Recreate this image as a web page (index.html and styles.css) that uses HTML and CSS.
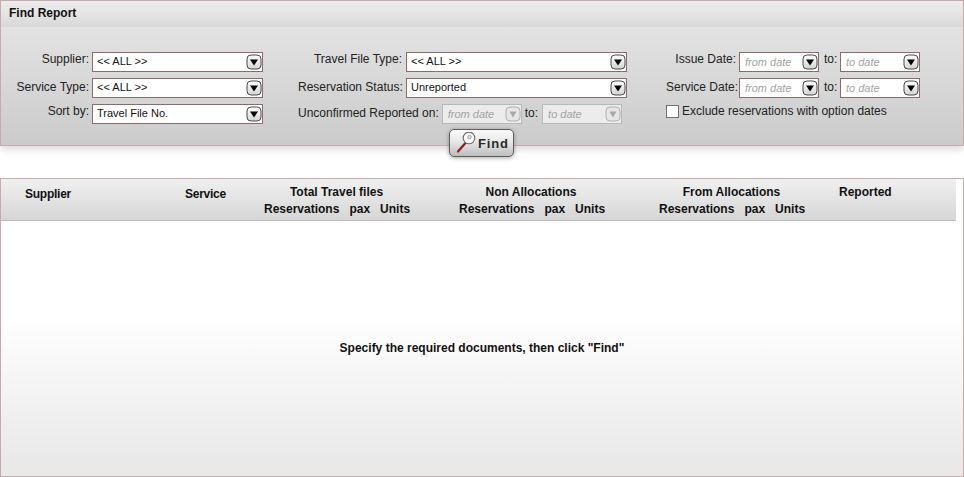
FILE: index.html
```html
<!DOCTYPE html>
<html lang="en">
<head>
<meta charset="utf-8">
<title>Find Report</title>
<link rel="stylesheet" href="styles.css">
</head>
<body>
<section class="panel">
  <h1 class="panel-title">Find Report</h1>
  <div class="form">
    <div class="col col-1">
      <label class="label up-3">Supplier:</label>
      <div class="field w-171"><span class="value">&lt;&lt; ALL &gt;&gt;</span><svg class="arrow"><use href="#arr"/></svg></div>
      <label class="label up-1">Service Type:</label>
      <div class="field w-171"><span class="value">&lt;&lt; ALL &gt;&gt;</span><svg class="arrow"><use href="#arr"/></svg></div>
      <label class="label up-3">Sort by:</label>
      <div class="field w-171"><span class="value">Travel File No.</span><svg class="arrow"><use href="#arr"/></svg></div>
    </div>
    <div class="col col-2">
      <label class="label up-3">Travel File Type:</label>
      <div class="field w-221"><span class="value">&lt;&lt; ALL &gt;&gt;</span><svg class="arrow"><use href="#arr"/></svg></div>
      <label class="label up-1">Reservation Status:</label>
      <div class="field w-221"><span class="value">Unreported</span><svg class="arrow"><use href="#arr"/></svg></div>
      <div class="unconfirmed">
        <label class="label up-1">Unconfirmed Reported on:</label>
        <div class="field date disabled"><span class="value">from date</span><svg class="arrow"><use href="#arr-off"/></svg></div>
        <span class="label to up-1">to:</span>
        <div class="field date disabled"><span class="value">to date</span><svg class="arrow"><use href="#arr-off"/></svg></div>
      </div>
    </div>
    <div class="col col-3">
      <label class="label up-3">Issue Date:</label>
      <div class="field date"><span class="value">from date</span><svg class="arrow"><use href="#arr"/></svg></div>
      <span class="label to up-3">to:</span>
      <div class="field date"><span class="value">to date</span><svg class="arrow"><use href="#arr"/></svg></div>
      <label class="label up-1">Service Date:</label>
      <div class="field date"><span class="value">from date</span><svg class="arrow"><use href="#arr"/></svg></div>
      <span class="label to up-1">to:</span>
      <div class="field date"><span class="value">to date</span><svg class="arrow"><use href="#arr"/></svg></div>
      <div class="exclude"><span class="checkbox"></span><span class="label">Exclude reservations with option dates</span></div>
    </div>
  </div>
  <button class="find" type="button">
    <svg class="lens" width="22" height="22" viewBox="0 0 22 22">
      <path d="M2 19.500 L9 11.500" stroke="#8e1a1c" stroke-width="2.200" stroke-linecap="round"/>
      <circle cx="13" cy="6" r="5.800" fill="#fbfbfb" stroke="#6a6a6a" stroke-width="1.100"/>
      <circle cx="13.500" cy="5" r="1.800" fill="#dcdcdc" stroke="#8a8a8a" stroke-width="0.700"/>
    </svg>
    <span>Find</span>
  </button>
</section>

<section class="results">
  <div class="head-wrap">
    <div class="head">
      <div class="h-cell h-supplier">Supplier</div>
      <div class="h-cell h-service">Service</div>
      <div class="h-group h-g1">
        <div class="g-title">Total Travel files</div>
        <div class="g-subs"><span>Reservations</span><span>pax</span><span>Units</span></div>
      </div>
      <div class="h-group h-g2">
        <div class="g-title">Non Allocations</div>
        <div class="g-subs"><span>Reservations</span><span>pax</span><span>Units</span></div>
      </div>
      <div class="h-group h-g3">
        <div class="g-title">From Allocations</div>
        <div class="g-subs"><span>Reservations</span><span>pax</span><span>Units</span></div>
      </div>
      <div class="h-reported">Reported</div>
    </div>
  </div>
  <div class="results-body">
    <p class="hint">Specify the required documents, then click "Find"</p>
  </div>
</section>

<svg class="defs" width="0" height="0">
  <defs>
    <linearGradient id="btn" x1="0" y1="0" x2="0" y2="1">
      <stop offset="0" stop-color="#ffffff"/><stop offset="1" stop-color="#d4d4d4"/>
    </linearGradient>
    <symbol id="arr" viewBox="0 0 16 16">
      <rect x="1" y="1" width="14" height="14" rx="4" fill="url(#btn)" stroke="#4a4a4a"/>
      <path d="M4 5.500 H12 L8 11.500 Z" fill="#000"/>
    </symbol>
    <symbol id="arr-off" viewBox="0 0 16 16">
      <rect x="1" y="1" width="14" height="14" rx="4" fill="#e6e6e6" stroke="#b0b0b0"/>
      <path d="M4.500 5.500 H11.500 L8 11.500 Z" fill="#a8a8a8"/>
    </symbol>
  </defs>
</svg>
</body>
</html>
```
FILE: styles.css
```css
* { box-sizing: border-box; }
html, body { margin: 0; padding: 0; }
body {
  width: 964px;
  height: 477px;
  overflow: hidden;
  background: #fff;
  font-family: "Liberation Sans", Arial, sans-serif;
  font-size: 12px;
  color: #222;
}
.defs { display: block; height: 0; }

.panel {
  height: 146px;
  border: 1px solid #c9a9ab;
  background: linear-gradient(#e8e8e8, #cbcbcb);
  box-shadow: 0 3px 8px rgba(0,0,0,.16);
  display: flex;
  flex-direction: column;
}
.panel-title {
  margin: 0;
  height: 26px;
  flex: none;
  padding: 5px 0 0 8px;
  font-size: 12px;
  line-height: 14px;
  font-weight: bold;
  color: #111;
  background: linear-gradient(#ececec 0, #e6e6e6 40%, #d8d8d8 100%);
}
.form {
  display: flex;
  flex: none;
  padding-top: 25px;
  height: 102px;
}
.col { display: grid; grid-auto-rows: 20px; row-gap: 6px; align-items: center; }
.col-1 { grid-template-columns: 88px 171px; column-gap: 3px; width: 297px; }
.col-2 { grid-template-columns: 104px 221px; column-gap: 4px; width: 368px; }
.col-3 { grid-template-columns: 70px 80px 15px 80px; column-gap: 3px; }
.label { text-align: right; white-space: nowrap; line-height: 14px; }
.up-3 { margin-top: -6px; }
.up-1 { margin-top: -2px; }
.to { text-align: left; padding-left: 2px; }
.field {
  height: 20px;
  background: #fff;
  border: 1px solid #8a6a6a;
  display: flex;
  align-items: center;
  justify-content: space-between;
  padding: 0 0 0 4px;
  font-size: 11px;
  color: #111;
}
.value { white-space: nowrap; }
.w-171 .value, .w-221 .value { margin: -1px 0 1px; }
.arrow { width: 16px; height: 16px; flex: none; }
.w-171 { width: 171px; }
.w-221 { width: 221px; }
.date { width: 80px; }
.date .value { font-style: italic; color: #a3a3a3; padding-left: 1px; }
.disabled { background: #ececec; border-color: #b9b9b9; }
.unconfirmed {
  grid-column: 1 / 3;
  display: flex;
  align-items: center;
  height: 20px;
}
.unconfirmed .label { margin-right: 3px; }
.unconfirmed .to { margin: -2px 4px 0 3px; padding: 0; }
.exclude {
  grid-column: 1 / 5;
  display: flex;
  align-items: center;
  margin-top: -6px;
}
.exclude .label { margin-left: 3px; }
.checkbox {
  width: 13px;
  height: 13px;
  border: 1px solid #6e6e6e;
  background: #fff;
  flex: none;
}

.find {
  position: relative;
  z-index: 2;
  align-self: center;
  margin: 0 0 0 -1px;
  width: 65px;
  height: 28px;
  flex: none;
  border: 1px solid #5e5e5e;
  border-radius: 5px;
  background: linear-gradient(#fafafa, #e8e8e8 45%, #bdbdbd);
  box-shadow: 0 1px 4px rgba(0,0,0,.35);
  padding: 0 0 0 6px;
  display: flex;
  align-items: center;
  font-family: "Liberation Sans", Arial, sans-serif;
  font-size: 13px;
  font-weight: bold;
  letter-spacing: .8px;
  color: #2a2a2a;
}
.lens { flex: none; }

.results {
  margin-top: 32px;
  height: 299px;
  border: 1px solid #c9a9ab;
}
.head-wrap { padding-right: 7px; }
.head {
  height: 42px;
  display: grid;
  grid-template-columns: 184px 79px 195px 200px 180px 1fr;
  background: linear-gradient(#f0f0f0, #d6d6d6);
  border-bottom: 1px solid #bdbdbd;
  font-weight: bold;
  color: #111;
}
.h-cell { padding: 8px 0 0 24px; line-height: 14px; letter-spacing: -.25px; }
.h-service { padding-left: 0; }
.g-title { text-align: center; line-height: 14px; padding-top: 6px; padding-right: 50px; }
.h-g2 .g-title { padding-right: 56px; }
.h-g3 .g-title { padding-right: 35px; }
.g-subs { display: flex; gap: 10px; padding-top: 3px; line-height: 14px; }
.h-reported { padding-top: 6px; line-height: 14px; }
.results-body {
  height: 255px;
  padding-bottom: 2px;
  display: flex;
  align-items: center;
  justify-content: center;
  background: linear-gradient(#fff 37%, #e9e9e9 94%);
}
.hint { margin: 0; font-weight: bold; color: #111; }
```
